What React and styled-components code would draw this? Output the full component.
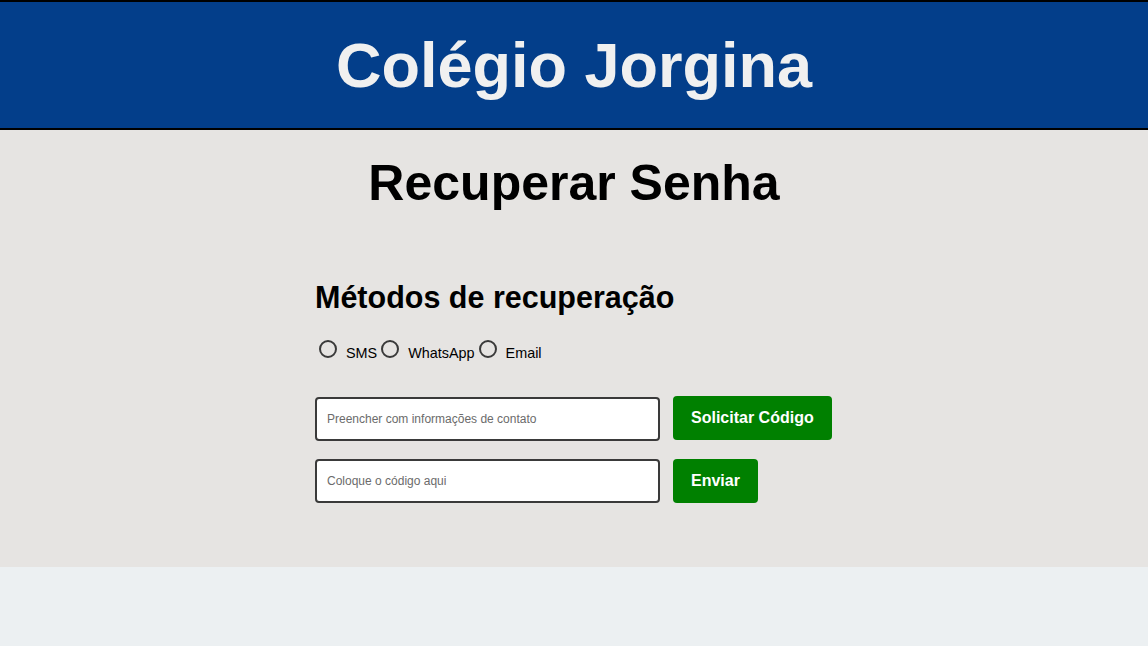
import React from "react";
import styled, { createGlobalStyle } from "styled-components";

const Global = createGlobalStyle`
  html, body { margin: 0; padding: 0; background: #ecf0f2; font-family: "Liberation Sans", Arial, sans-serif; }
`;

const Header = styled.header`
  height: 126px;
  background: #033e8a;
  border-top: 2px solid #000;
  border-bottom: 2px solid #000;
  display: flex;
  align-items: center;
  justify-content: center;
`;

const Title = styled.h1`
  margin: 0;
  color: #f0f0f0;
  font-size: 63px;
  font-weight: bold;
`;

const Main = styled.main`
  background: #e6e4e2;
  padding: 22px 0 64px;
`;

const PageTitle = styled.h2`
  margin: 0;
  text-align: center;
  font-size: 50px;
  font-weight: bold;
  color: #000;
  line-height: 62px;
`;

const Form = styled.form`
  width: 518px;
  margin: 0 auto;
  padding-top: 66px;
`;

const Subtitle = styled.h3`
  margin: 0;
  font-size: 30.5px;
  font-weight: bold;
  line-height: 34px;
`;

const RadioRow = styled.div`
  display: flex;
  align-items: center;
  margin-top: 29px;
  font-size: 14.4px;
`;

const RadioLabel = styled.label`
  display: flex;
  align-items: flex-end;
  color: #000;
`;

const Circle = styled.span`
  width: 14px;
  height: 14px;
  border: 2px solid #3a3a3a;
  border-radius: 50%;
  margin: 0 9px 0 4px;
  position: relative;
  top: -3px;
`;

const Row = styled.div`
  display: flex;
  align-items: flex-start;
  gap: 13px;
  margin-top: ${(p) => p.$mt}px;
`;

const Input = styled.input`
  box-sizing: border-box;
  width: 345px;
  height: 44px;
  border: 2px solid #3a3a3a;
  border-radius: 4px;
  background: #fff;
  padding: 0 10px;
  font-family: "Liberation Sans", Arial, sans-serif;
  font-size: 12px;
  margin-top: ${(p) => p.$mt || 0}px;
  &::placeholder { color: #6b6b6b; }
`;

const Button = styled.button`
  box-sizing: border-box;
  height: 44px;
  padding: 0 18px;
  background: #008000;
  color: #fff;
  border: none;
  border-radius: 4px;
  font-family: "Liberation Sans", Arial, sans-serif;
  font-size: 16px;
  font-weight: bold;
`;

export default function App() {
  return (
    <>
      <Global />
      <Header>
        <Title>Colégio Jorgina</Title>
      </Header>
      <Main>
        <PageTitle>Recuperar Senha</PageTitle>
        <Form onSubmit={(e) => e.preventDefault()}>
          <Subtitle>Métodos de recuperação</Subtitle>
          <RadioRow>
            <RadioLabel><Circle />SMS</RadioLabel>
            <RadioLabel><Circle />WhatsApp</RadioLabel>
            <RadioLabel><Circle />Email</RadioLabel>
          </RadioRow>
          <Row $mt={35}>
            <Input $mt={1} placeholder="Preencher com informações de contato" />
            <Button type="button">Solicitar Código</Button>
          </Row>
          <Row $mt={18}>
            <Input placeholder="Coloque o código aqui" />
            <Button type="button">Enviar</Button>
          </Row>
        </Form>
      </Main>
    </>
  );
}
